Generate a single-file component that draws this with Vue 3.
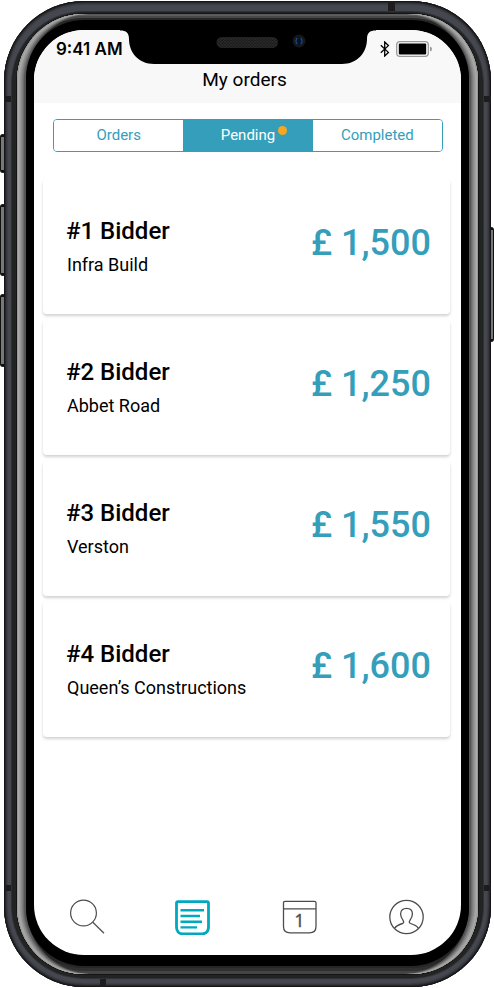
<script setup>
import { ref } from 'vue'

const tabs = [
  { id: 'orders', label: 'Orders', alert: false },
  { id: 'pending', label: 'Pending', alert: true },
  { id: 'completed', label: 'Completed', alert: false },
]
const activeTab = ref('pending')

const bids = [
  { rank: 1, company: 'Infra Build', price: '1,500' },
  { rank: 2, company: 'Abbet Road', price: '1,250' },
  { rank: 3, company: 'Verston', price: '1,550' },
  { rank: 4, company: 'Queen’s Constructions', price: '1,600' },
]
</script>

<template>
  <div class="stage">
    <div class="shell">
      <i class="key key-mute"></i>
      <i class="key key-up"></i>
      <i class="key key-down"></i>
      <i class="key key-power"></i>
      <div class="rail">
        <i class="band band-side band-high"></i>
        <i class="band band-side band-low"></i>
        <i class="band band-top"></i>
        <i class="band band-bottom"></i>
        <div class="rim">
          <div class="sheen">
            <div class="bezel">
              <div class="screen">
                <svg class="notch" viewBox="0 0 256 35" width="256" height="35" aria-hidden="true">
                  <defs>
                    <pattern id="mesh" width="3" height="3" patternUnits="userSpaceOnUse">
                      <rect width="3" height="3" fill="#1d1d1d" />
                      <path d="M0 0L3 3M3 0L0 3" stroke="#2b2b2b" stroke-width=".7" />
                    </pattern>
                  </defs>
                  <path d="M0 0H256V.5C249.500 .5 247 3 247 9C247 23 237 34 222 34H34C19 34 9 23 9 9C9 3 6.500 .5 0 .5Z" fill="#000" />
                  <rect x="96.500" y="7" width="61.500" height="11" rx="5.500" fill="url(#mesh)" />
                  <circle cx="179" cy="11" r="6.500" fill="#15171b" />
                  <circle cx="179" cy="11" r="4" fill="#0a1322" />
                  <path d="M177.300 7.800Q174.600 11 177.300 14.200M180.700 7.800Q183.400 11 180.700 14.200" fill="none" stroke="#164a8c" stroke-width="1.300" />
                </svg>

                <header class="top">
                  <div class="status">
                    <span class="clock">9:41 AM</span>
                    <span class="indicators">
                      <svg width="10" height="16" viewBox="0 0 10 16" aria-label="Bluetooth">
                        <path d="M.8 4.300L8.400 11.400L4.700 15V1L8.400 4.600L.8 11.700" fill="none" stroke="#000" stroke-width="1.300" />
                      </svg>
                      <svg width="37" height="16" viewBox="0 0 37 16" aria-label="Battery full">
                        <rect x=".7" y=".7" width="31.600" height="14.600" rx="3" fill="#fff" stroke="#999" stroke-width="1.300" />
                        <rect x="2.800" y="2.600" width="27.400" height="10.800" rx="1" fill="#000" />
                        <path d="M34 5.500Q36 6 36 8T34 10.500Z" fill="#999" />
                      </svg>
                    </span>
                  </div>
                  <h1 class="title">My orders</h1>
                </header>

                <main class="content">
                  <div class="tabs" role="tablist" aria-label="Order status">
                    <button
                      v-for="tab in tabs"
                      :key="tab.id"
                      class="tab"
                      :class="{ active: activeTab === tab.id }"
                      type="button"
                      role="tab"
                      :aria-selected="activeTab === tab.id"
                      @click="activeTab = tab.id"
                    >
                      <span class="tab-label">{{ tab.label }}<i v-if="tab.alert" class="dot"></i></span>
                    </button>
                  </div>

                  <ul class="bids">
                    <li v-for="bid in bids" :key="bid.rank" class="bid">
                      <div class="who">
                        <h2 class="name">#{{ bid.rank }} Bidder</h2>
                        <p class="company">{{ bid.company }}</p>
                      </div>
                      <strong class="price">£ {{ bid.price }}</strong>
                    </li>
                  </ul>
                </main>

                <nav class="nav" aria-label="Main">
                  <a class="nav-item" href="#search" aria-label="Search">
                    <svg width="36" height="36" viewBox="0 0 36 36" fill="none" stroke="#4d4d4d" stroke-width="1.200">
                      <circle cx="14.500" cy="14" r="12.900" />
                      <path d="M23.800 23.200L35 34.300" />
                    </svg>
                  </a>
                  <a class="nav-item" href="#orders" aria-label="Orders" aria-current="page">
                    <svg width="36" height="36" viewBox="0 0 36 36" fill="none" stroke="#00a8c0">
                      <path d="M3.500 2.700H32Q33.500 2.700 33.500 4.200V28Q33.500 34.800 27 34.800H8Q1.500 34.800 1.500 28V4.200Q1.500 2.700 3 2.700Z" stroke-width="2.800" />
                      <path d="M5.500 11.300H29M5.500 17H25M5.500 22.700H27M5.500 28.400H22" stroke-width="2.400" />
                    </svg>
                  </a>
                  <a class="nav-item" href="#calendar" aria-label="Calendar">
                    <svg width="36" height="36" viewBox="0 0 36 36" fill="none" stroke="#4d4d4d" stroke-width="1.300">
                      <path d="M3 2.300H32.500Q34 2.300 34 3.800V27.500Q34 33.800 27.500 33.800H8Q1.500 33.800 1.500 27.500V3.800Q1.500 2.300 3 2.300ZM1.500 9.800H34" />
                      <text class="day" x="17.500" y="28" text-anchor="middle">1</text>
                    </svg>
                  </a>
                  <a class="nav-item" href="#profile" aria-label="Profile">
                    <svg width="36" height="36" viewBox="0 0 36 36" fill="none" stroke="#4d4d4d" stroke-width="1.300">
                      <circle cx="18.500" cy="18" r="16.700" />
                      <path d="M6.500 29.300C8.500 26.300 12 25.200 14.500 24.500C16.200 24 15.800 22.800 15.200 21.700C13.600 19.500 12.600 17.500 12.600 15C12.600 11.500 15 9.300 18.500 9.300S24.400 11.500 24.400 15C24.400 17.500 23.400 19.500 21.800 21.700C21.200 22.800 20.800 24 22.500 24.500C25 25.200 28.500 26.300 30.500 29.300" />
                    </svg>
                  </a>
                </nav>
              </div>
            </div>
          </div>
        </div>
      </div>
    </div>
  </div>
</template>

<style>
body {
  margin: 0;
  background: #fff;
}
</style>

<style scoped>
* {
  box-sizing: border-box;
}

.stage {
  display: flex;
  min-height: 100vh;
  padding: 1px 3px 1px 4px;
  font-family: Roboto, "Liberation Sans", sans-serif;
  color: #000;
}

.shell,
.rail,
.rim,
.sheen,
.bezel,
.screen {
  position: relative;
  display: flex;
  flex: 1;
  min-width: 0;
}

.rail {
  padding: 11px 8px 9px;
  border-radius: 80px;
  background: #45474f;
  box-shadow:
    inset 0 0 0 1px #151515,
    inset 0 0 0 2px #26272a,
    inset 0 0 0 3px #35363c,
    inset 0 0 0 4px #3d3f46;
}

.rim {
  padding: 2px 5px 4px;
  border-radius: 72px;
  background: #222323;
  box-shadow: 0 0 0 1px #303136;
}

.sheen {
  padding: 6px 9px 8px;
  border-radius: 67px;
  background: #262626;
  box-shadow:
    0 0 0 1px #141414,
    inset 1px 0 0 #999,
    inset -1px 0 0 #999,
    inset 2px 0 0 #aaa,
    inset -2px 0 0 #aaa,
    inset 3px 0 0 #a2a2a2,
    inset -3px 0 0 #a2a2a2,
    inset 4px 0 0 #969696,
    inset -4px 0 0 #969696,
    inset 5px 0 0 #8a8a8a,
    inset -5px 0 0 #8a8a8a,
    inset 6px 0 0 #7c7c7c,
    inset -6px 0 0 #7c7c7c,
    inset 7px 0 0 #6c6c6c,
    inset -7px 0 0 #6c6c6c,
    inset 9px 0 0 #555,
    inset -9px 0 0 #555,
    inset 0 2px 0 #5c5c5c,
    inset 0 4px 0 #484848,
    inset 0 -3px 0 #444,
    inset 0 -6px 0 #303030;
}

.bezel {
  padding: 10px 8px 11px;
  border-radius: 58px;
  background: #000;
}

.screen {
  flex-direction: column;
  overflow: hidden;
  border-radius: 50px;
  background: #fff;
}

.key {
  position: absolute;
  left: -4px;
  width: 6px;
  border: solid #111;
  border-width: 3px 1px;
  border-radius: 3px;
  background: #77787a;
}

.key-mute {
  top: 133px;
  height: 39px;
}

.key-up {
  top: 203px;
  height: 72px;
}

.key-down {
  top: 293px;
  height: 73px;
}

.key-power {
  top: 226px;
  right: -3px;
  left: auto;
  height: 115px;
}

.band {
  position: absolute;
  background: #1d1d1f;
}

.band-side {
  right: 0;
  left: 0;
  height: 6px;
}

.band-high {
  top: 95px;
}

.band-low {
  bottom: 96px;
}

.band-top {
  top: 0;
  right: 96px;
  width: 7px;
  height: 10px;
}

.band-bottom {
  bottom: 0;
  left: 96px;
  width: 6px;
  height: 9px;
}

.notch {
  position: absolute;
  top: 0;
  left: 50%;
  transform: translateX(-50%);
}

.top {
  padding: 10px 28px 11px 22px;
  background: #f8f8f8;
}

.status {
  display: flex;
  align-items: center;
  justify-content: space-between;
  height: 18px;
}

.clock {
  font: 600 17px/18px Inter, "Liberation Sans", sans-serif;
}

.indicators {
  display: flex;
  gap: 6px;
}

.title {
  margin: 10px 0 0;
  font-size: 19px;
  font-weight: 400;
  line-height: 24px;
  text-align: center;
}

.content {
  flex: 1;
  padding: 16px 11px 24px 9px;
}

.tabs {
  display: flex;
  margin: 0 7px 0 10px;
  overflow: hidden;
  border: 1px solid #349ebb;
  border-radius: 4px;
}

.tab {
  flex: 1;
  padding: 0;
  border: 0;
  background: #fff;
  color: #349ebb;
  font: 400 15px/31px Roboto, "Liberation Sans", sans-serif;
  cursor: pointer;
}

.tab.active {
  background: #349ebb;
  color: #fff;
}

.tab-label {
  position: relative;
}

.dot {
  position: absolute;
  top: 0;
  right: -12px;
  width: 9px;
  height: 9px;
  border-radius: 50%;
  background: #f5a623;
}

.bids {
  display: grid;
  gap: 6px;
  margin: 27px 0 0;
  padding: 0;
  list-style: none;
}

.bid {
  display: flex;
  justify-content: space-between;
  min-height: 135px;
  padding: 36px 19px 35px 23px;
  border-radius: 4px;
  background: #fff;
  box-shadow: 0 2px 3px rgba(0, 0, 0, 0.18);
}

.name {
  margin: 0;
  font-size: 24px;
  font-weight: 500;
  line-height: 32px;
}

.company {
  margin: 4px 0 0;
  padding-left: 1px;
  font-size: 18px;
  line-height: 28px;
}

.price {
  color: #349ebb;
  font-size: 36px;
  font-weight: 500;
  line-height: 56px;
}

.nav {
  display: flex;
  padding: 0 2px 20px 0;
}

.nav-item {
  display: flex;
  flex: 1;
  justify-content: center;
}

.day {
  fill: #4d4d4d;
  stroke: #4d4d4d;
  stroke-width: 0.3px;
  font-family: "Noto Sans", sans-serif;
  font-size: 18px;
}
</style>
